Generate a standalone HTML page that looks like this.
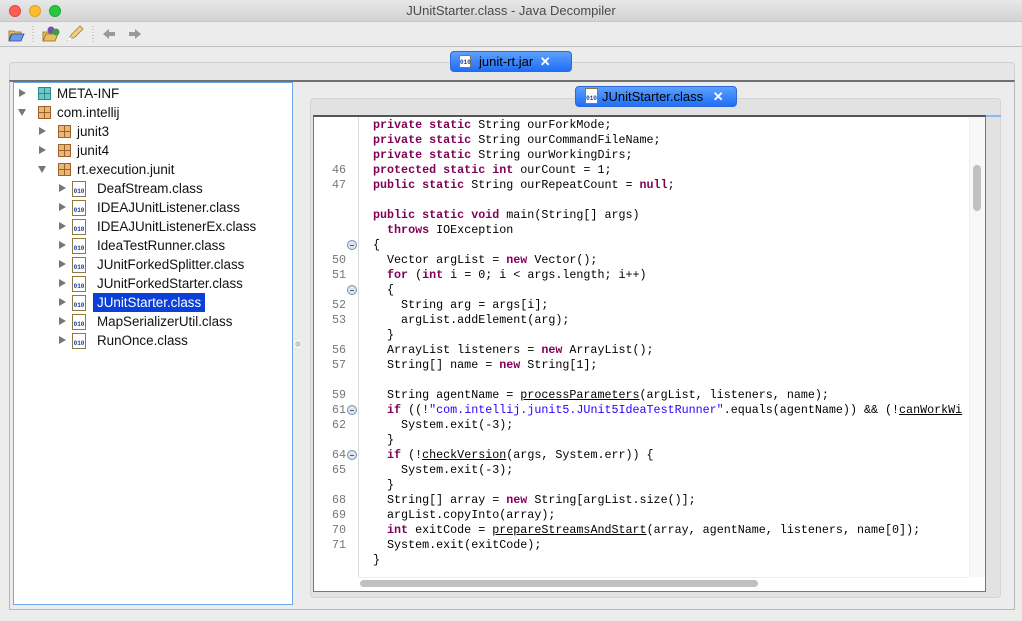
<!DOCTYPE html>
<html><head><style>
*{margin:0;padding:0;box-sizing:border-box}
body{width:1022px;height:621px;overflow:hidden;background:#ececec;font-family:"Liberation Sans",sans-serif;position:relative}
.abs{position:absolute}
.title{left:0;top:0;width:1022px;height:22px;background:linear-gradient(#e8e8e8,#d3d3d3);text-align:center;font-size:13px;line-height:22px;color:#4a4a4a;border-bottom:1px solid #c8c8c8}
.dot{width:12px;height:12px;border-radius:50%;top:5px}
.tab{background:linear-gradient(#5ea0ff,#1f6ef5);border:1px solid #2d6ad9;border-radius:4px;color:#000;font-size:13px;line-height:20px;height:21px}
.tree{left:13px;top:82px;width:280px;height:523px;background:#fff;border:1px solid #6ba6e6;font-size:13.4px}
.row{position:absolute;height:19px;line-height:19px;white-space:nowrap;color:#111}
.tri{position:absolute;width:0;height:0}
.tr{border-left:7px solid #777;border-top:4.5px solid transparent;border-bottom:4.5px solid transparent;top:5px}
.td{border-top:7px solid #777;border-left:4.5px solid transparent;border-right:4.5px solid transparent;top:6px}
.pkg{position:absolute;top:3px;width:13px;height:13px;border:1px solid #a0602a;background:#e8b878}
.pkg:before{content:"";position:absolute;left:5px;top:0;width:1px;height:11px;background:#a0602a}
.pkg:after{content:"";position:absolute;top:5px;left:0;height:1px;width:11px;background:#a0602a}
.meta{border-color:#2c8a8a;background:#6cc8c8}
.meta:before,.meta:after{background:#2c8a8a}
.cls{position:absolute;top:2px;width:14px;height:16px;border:1px solid #8a7a40;background:#fff;font-size:6px;line-height:6px;color:#1a3a9a;font-weight:bold;padding-top:7px;text-align:center;font-family:"Liberation Mono",monospace}
.code{left:373px;top:118px;font-family:"Liberation Mono",monospace;font-size:11.7px;line-height:15px;white-space:pre;color:#000}
.nums{left:318px;top:118px;width:28px;text-align:right;font-family:"Liberation Mono",monospace;font-size:11.7px;line-height:15px;color:#777}
.nums div{height:15px}
b{color:#7f0055}
.s{color:#2a00ff}
u{text-decoration:underline}
.fold{position:absolute;left:347px;width:10px;height:10px;border-radius:50%;border:1px solid #7a8ea8;background:#dde6f0}
.fold:after{content:"";position:absolute;left:2px;top:3.5px;width:4px;height:1px;background:#4a5a70}
</style></head><body>
<div class="abs title">JUnitStarter.class - Java Decompiler</div>
<div class="abs dot" style="left:9px;background:#fe5f57;border:1px solid #e0443e"></div>
<div class="abs dot" style="left:29px;background:#febc2e;border:1px solid #dea123"></div>
<div class="abs dot" style="left:49px;background:#28c840;border:1px solid #1aab29"></div>
<svg class="abs" style="left:0;top:22px" width="150" height="24">
<path d="M9 9h5l1 1h6v2H11l-2 7z" fill="#e8c060" stroke="#8a6a20" stroke-width=".8"/>
<path d="M9 19l3-7h12l-3 7z" fill="#6a9ae8" stroke="#2a4a9a" stroke-width=".8"/>
<line x1="33" y1="4" x2="33" y2="20" stroke="#aaa" stroke-dasharray="1 2"/>
<path d="M43 19l3-7h12l-3 7z M43 19v-9h5l1 1h5" fill="#e8c060" stroke="#8a6a20" stroke-width=".8"/>
<circle cx="51" cy="8" r="3.5" fill="#7050b0"/><circle cx="56" cy="10" r="3.5" fill="#40a040"/>
<path d="M68 18l4-6 8-8 3 3-8 8z" fill="#f0d080" stroke="#a08030" stroke-width=".8"/>
<path d="M68 18l3-2" stroke="#fff" stroke-width="2"/>
<line x1="93" y1="4" x2="93" y2="20" stroke="#aaa" stroke-dasharray="1 2"/>
<path d="M103 12l6-5v3h6v4h-6v3z" fill="#999"/>
<path d="M141 12l-6-5v3h-6v4h6v3z" fill="#999"/>
</svg>
<div class="abs" style="left:0;top:46px;width:1022px;height:1px;background:#c0c0c0"></div>
<div class="abs" style="left:9px;top:62px;width:1006px;height:548px;background:#e6e6e6;border:1px solid #d0d0d0;border-radius:4px"></div>
<div class="abs" style="left:9px;top:80px;width:1006px;height:530px;background:#ececec;border:1px solid #b8b8b8;border-top:2px solid #707070"></div>
<div class="abs tab" style="left:450px;top:51px;width:122px;padding-left:28px">junit-rt.jar <span style="color:#fff;font-weight:bold;margin-left:3px">✕</span></div>
<div class="abs cls" style="left:459px;top:55px;width:12px;height:13px;padding-top:4px;border-radius:2px">010</div>
<div class="abs tree">
<div class="row" style="top:1px;left:0"><div class="tri tr" style="left:5px"></div><div class="pkg meta" style="left:24px"></div><span style="position:absolute;left:43px">META-INF</span></div>
<div class="row" style="top:20px;left:0"><div class="tri td" style="left:4px"></div><div class="pkg" style="left:24px"></div><span style="position:absolute;left:43px">com.intellij</span></div>
<div class="row" style="top:39px;left:20px"><div class="tri tr" style="left:5px"></div><div class="pkg" style="left:24px"></div><span style="position:absolute;left:43px">junit3</span></div>
<div class="row" style="top:58px;left:20px"><div class="tri tr" style="left:5px"></div><div class="pkg" style="left:24px"></div><span style="position:absolute;left:43px">junit4</span></div>
<div class="row" style="top:77px;left:20px"><div class="tri td" style="left:4px"></div><div class="pkg" style="left:24px"></div><span style="position:absolute;left:43px">rt.execution.junit</span></div>
<div class="row" style="top:96px;left:40px"><div class="tri tr" style="left:5px"></div><div class="cls" style="left:18px">010</div><span style="position:absolute;left:43px">DeafStream.class</span></div>
<div class="row" style="top:115px;left:40px"><div class="tri tr" style="left:5px"></div><div class="cls" style="left:18px">010</div><span style="position:absolute;left:43px">IDEAJUnitListener.class</span></div>
<div class="row" style="top:134px;left:40px"><div class="tri tr" style="left:5px"></div><div class="cls" style="left:18px">010</div><span style="position:absolute;left:43px">IDEAJUnitListenerEx.class</span></div>
<div class="row" style="top:153px;left:40px"><div class="tri tr" style="left:5px"></div><div class="cls" style="left:18px">010</div><span style="position:absolute;left:43px">IdeaTestRunner.class</span></div>
<div class="row" style="top:172px;left:40px"><div class="tri tr" style="left:5px"></div><div class="cls" style="left:18px">010</div><span style="position:absolute;left:43px">JUnitForkedSplitter.class</span></div>
<div class="row" style="top:191px;left:40px"><div class="tri tr" style="left:5px"></div><div class="cls" style="left:18px">010</div><span style="position:absolute;left:43px">JUnitForkedStarter.class</span></div>
<div class="row" style="top:210px;left:40px"><div class="tri tr" style="left:5px"></div><div class="cls" style="left:18px">010</div><span style="position:absolute;left:39px;top:0;height:19px;padding:0 4px;background:#0a3fd8;color:#fff">JUnitStarter.class</span></div>
<div class="row" style="top:229px;left:40px"><div class="tri tr" style="left:5px"></div><div class="cls" style="left:18px">010</div><span style="position:absolute;left:43px">MapSerializerUtil.class</span></div>
<div class="row" style="top:248px;left:40px"><div class="tri tr" style="left:5px"></div><div class="cls" style="left:18px">010</div><span style="position:absolute;left:43px">RunOnce.class</span></div>
</div>
<div class="abs" style="left:294px;top:340px;width:8px;height:8px;border-radius:50%;background:#ccc;border:1px solid #fff"></div>
<div class="abs" style="left:310px;top:98px;width:691px;height:500px;background:#e2e2e2;border:1px solid #d4d4d4;border-radius:4px"></div>
<div class="abs" style="left:986px;top:115px;width:15px;height:2px;background:#8ab8f8"></div>
<div class="abs" style="left:313px;top:115px;width:673px;height:477px;background:#fff;border:1px solid #777;border-top:2px solid #555"></div>
<div class="abs tab" style="left:575px;top:86px;width:162px;padding-left:26px">JUnitStarter.class <span style="color:#fff;font-weight:bold;margin-left:6px">✕</span></div>
<div class="abs cls" style="left:585px;top:88px;width:13px;height:16px">010</div>
<div class="abs" style="left:358px;top:117px;width:1px;height:460px;background:#ddd"></div>
<div class="abs" style="left:358px;top:577px;width:611px;height:13px;background:#fff;border-top:1px solid #eee"></div>
<div class="abs" style="left:360px;top:580px;width:398px;height:7px;border-radius:4px;background:#c0c0c0"></div>
<div class="abs nums"><div></div><div></div><div></div><div>46</div><div>47</div><div></div><div></div><div></div><div></div><div>50</div><div>51</div><div></div><div>52</div><div>53</div><div></div><div>56</div><div>57</div><div></div><div>59</div><div>61</div><div>62</div><div></div><div>64</div><div>65</div><div></div><div>68</div><div>69</div><div>70</div><div>71</div></div>
<div class="fold" style="top:240px"></div>
<div class="fold" style="top:285px"></div>
<div class="fold" style="top:405px"></div>
<div class="fold" style="top:450px"></div>
<div class="abs code"><b>private static</b> String ourForkMode;
<b>private static</b> String ourCommandFileName;
<b>private static</b> String ourWorkingDirs;
<b>protected static int</b> ourCount = 1;
<b>public static</b> String ourRepeatCount = <b>null</b>;

<b>public static void</b> main(String[] args)
  <b>throws</b> IOException
{
  Vector argList = <b>new</b> Vector();
  <b>for</b> (<b>int</b> i = 0; i &lt; args.length; i++)
  {
    String arg = args[i];
    argList.addElement(arg);
  }
  ArrayList listeners = <b>new</b> ArrayList();
  String[] name = <b>new</b> String[1];

  String agentName = <u>processParameters</u>(argList, listeners, name);
  <b>if</b> ((!<span class="s">"com.intellij.junit5.JUnit5IdeaTestRunner"</span>.equals(agentName)) &amp;&amp; (!<u>canWorkWi</u>
    System.exit(-3);
  }
  <b>if</b> (!<u>checkVersion</u>(args, System.err)) {
    System.exit(-3);
  }
  String[] array = <b>new</b> String[argList.size()];
  argList.copyInto(array);
  <b>int</b> exitCode = <u>prepareStreamsAndStart</u>(array, agentName, listeners, name[0]);
  System.exit(exitCode);
}</div>
<div class="abs" style="left:969px;top:117px;width:16px;height:460px;background:#f8f8f8;border-left:1px solid #eee"></div>
<div class="abs" style="left:973px;top:165px;width:8px;height:46px;border-radius:4px;background:#c0c0c0"></div>
</body></html>
